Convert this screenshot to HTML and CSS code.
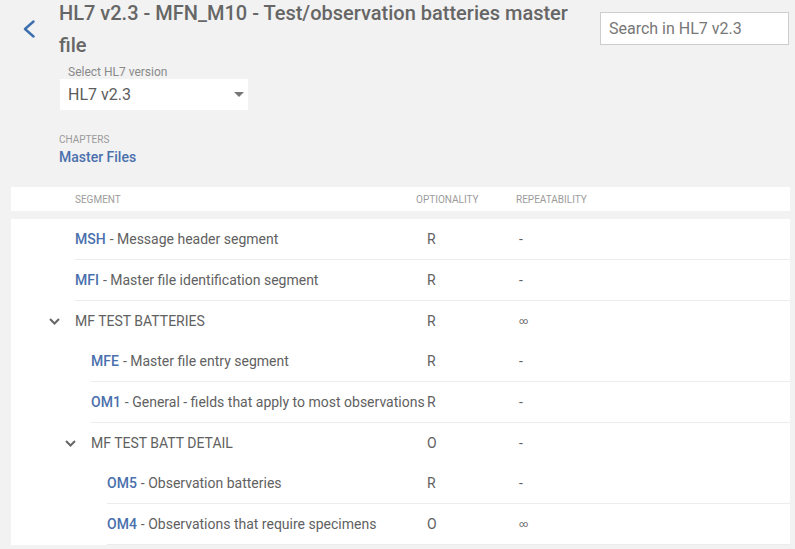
FILE: index.html
```html
<!DOCTYPE html>
<html lang="en">
<head>
<meta charset="utf-8">
<title>HL7 v2.3 - MFN_M10</title>
<link rel="stylesheet" href="styles.css">
</head>
<body>
<div class="page">
  <header class="head">
    <div class="back">
      <svg width="14" height="18" viewBox="0 0 14 18"><polyline points="11.5,1.5 3,9 11.5,16.5" fill="none" stroke="#3d6fae" stroke-width="2.4" stroke-linecap="round" stroke-linejoin="round"/></svg>
    </div>
    <div class="title-col">
      <h1 class="title">HL7 v2.3 - MFN_M10 - Test/observation batteries master file</h1>
      <div class="field">
        <div class="field-label">Select HL7 version</div>
        <div class="select">
          <span>HL7 v2.3</span>
          <span class="caret"></span>
        </div>
      </div>
      <div class="chapters">
        <div class="chapters-label">CHAPTERS</div>
        <div class="chapters-link">Master Files</div>
      </div>
    </div>
    <div class="search"><span>Search in HL7 v2.3</span></div>
  </header>

  <div class="thead">
    <div class="th th-seg">Segment</div>
    <div class="th th-opt">Optionality</div>
    <div class="th th-rep">Repeatability</div>
  </div>

  <div class="tbody">
    <div class="row lvl0"><div class="seg"><b>MSH</b> - Message header segment</div><div class="opt">R</div><div class="rep">-</div></div>
    <div class="row lvl0"><div class="seg"><b>MFI</b> - Master file identification segment</div><div class="opt">R</div><div class="rep">-</div></div>
    <div class="row group lvl0"><div class="seg"><span class="chev"><svg width="11" height="7" viewBox="0 0 11 7"><polyline points="1,1 5.5,5.5 10,1" fill="none" stroke="#666" stroke-width="2"/></svg></span>MF TEST BATTERIES</div><div class="opt">R</div><div class="rep inf">∞</div></div>
    <div class="row lvl1"><div class="seg"><b>MFE</b> - Master file entry segment</div><div class="opt">R</div><div class="rep">-</div></div>
    <div class="row lvl1"><div class="seg"><b>OM1</b> - General - fields that apply to most observations</div><div class="opt">R</div><div class="rep">-</div></div>
    <div class="row group lvl1"><div class="seg"><span class="chev"><svg width="11" height="7" viewBox="0 0 11 7"><polyline points="1,1 5.5,5.5 10,1" fill="none" stroke="#666" stroke-width="2"/></svg></span>MF TEST BATT DETAIL</div><div class="opt">O</div><div class="rep">-</div></div>
    <div class="row lvl2"><div class="seg"><b>OM5</b> - Observation batteries</div><div class="opt">R</div><div class="rep">-</div></div>
    <div class="row lvl2"><div class="seg"><b>OM4</b> - Observations that require specimens</div><div class="opt">O</div><div class="rep inf">∞</div></div>
  </div>
</div>
</body>
</html>
```

FILE: styles.css
```css
* { box-sizing: border-box; }
html, body { margin: 0; padding: 0; }
body {
  background: #f2f2f2;
  font-family: Roboto, "Noto Sans", Arial, sans-serif;
  color: #616161;
}
.page { padding: 0 5px 0 11px; }

.head { display: flex; align-items: flex-start; }
.back { width: 48px; flex: none; padding: 20px 0 0 11px; }
.back svg { display: block; }
.title-col { flex: 1; min-width: 0; padding-right: 22px; }
.title {
  margin: -3px 0 0;
  font-size: 20px;
  line-height: 32px;
  font-weight: 500;
  color: #666;
}
.field { margin-top: 4px; }
.field-label {
  font-size: 12px;
  line-height: 14px;
  color: #8a8a8a;
  padding-left: 9px;
}
.select {
  margin-left: 1px;
  width: 188px;
  height: 31px;
  background: #fff;
  display: flex;
  align-items: center;
  justify-content: space-between;
  padding: 0 4px 0 8px;
  font-size: 16px;
  color: #5c5c5c;
}
.caret {
  width: 0; height: 0;
  border-left: 5px solid transparent;
  border-right: 5px solid transparent;
  border-top: 5px solid #777;
}
.chapters { margin-top: 24px; }
.chapters-label { font-size: 10px; line-height: 12px; color: #9a9a9a; }
.chapters-link {
  margin-top: 1px;
  font-size: 14px;
  line-height: 20px;
  font-weight: 500;
  color: #4a70ad;
}
.search {
  flex: none;
  margin-top: 12px;
  margin-right: 1px;
  width: 189px;
  height: 33px;
  background: #fff;
  border: 1px solid #cdcdcd;
  padding-left: 8px;
  display: flex;
  align-items: center;
  font-size: 16px;
  color: #777;
}

.thead {
  margin-top: 20px;
  height: 24px;
  background: #fff;
  display: flex;
  align-items: center;
  padding-left: 64px;
  font-size: 10px;
  color: #9c9c9c;
  text-transform: uppercase;
}
.th-seg { width: 341px; }
.th-opt { width: 100px; }

.tbody { margin-top: 8px; background: #fff; }
.row {
  display: flex;
  align-items: center;
  height: 41px;
  border-bottom: 1px solid #ececec;
  font-size: 14px;
  color: #616161;
}
.row.group { height: 40px; border-bottom: 0; }
.lvl0 { margin-left: 64px; }
.lvl1 { margin-left: 80px; }
.lvl2 { margin-left: 96px; }
.row.group.lvl0 { margin-left: 38px; }
.row.group.lvl1 { margin-left: 54px; }
.seg { flex: 1; min-width: 0; white-space: nowrap; display: flex; align-items: center; }
.seg b { font-weight: 500; color: #4a70ad; margin-right: 4px; }
.chev { width: 26px; flex: none; display: flex; align-items: center; }
.chev svg { display: block; }
.opt { width: 92px; flex: none; }
.rep { width: 271px; flex: none; }
.rep.inf { font-size: 9px; }
```
